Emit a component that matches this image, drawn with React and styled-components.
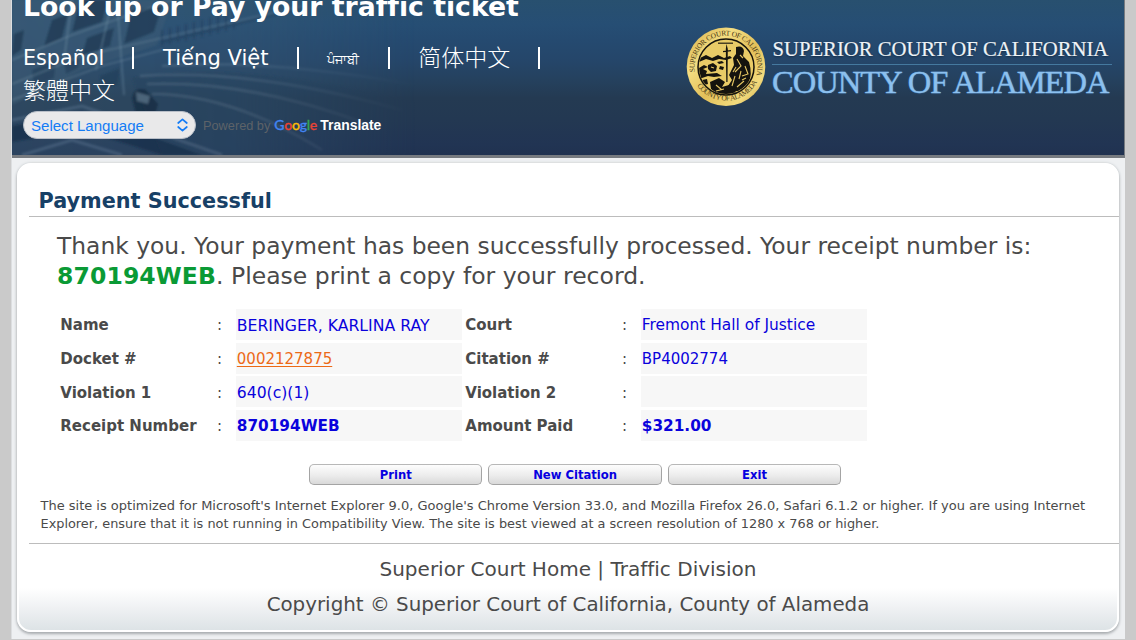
import React from 'react';
import styled, { createGlobalStyle } from 'styled-components';

const Global = createGlobalStyle`
  * { box-sizing: border-box; }
  body {
    margin: 0;
    background: #cacaca;
    color: #4a4a4a;
    font-family: Verdana, "DejaVu Sans", "Noto Sans CJK SC", sans-serif;
    font-variant-ligatures: none;
    overflow: hidden;
  }
`;

const Page = styled.div`
  width: 1114px;
  height: 639px;
  margin-left: 11px;
  background: #eef0f2;
  border-left: 1px solid #dcdee0;
  overflow: hidden;
`;

const Header = styled.header`
  position: relative;
  width: 1113px;
  height: 158px;
  border-bottom: 3px solid #777b80;
  border-right: 1px solid #777b80;
  background: linear-gradient(#28506f 0, #264e74 24px, #254a70 40px, #25466a 60px, #25415e 80px, #243a52 98px, #233852 120px, #213453 145px, #203250 155px);
`;

const Backdrop = styled.svg`
  position: absolute;
  left: 0;
  top: 0;
`;

const HeaderRow = styled.div`
  position: relative;
  display: flex;
  align-items: flex-start;
  height: 155px;
  padding-left: 11px;
`;

const Languages = styled.div`
  width: 663px;
`;

const SiteTitle = styled.h1`
  margin: -11px 0 0;
  color: #fff;
  font-size: 26.7px;
  line-height: 36px;
  height: 36px;
  white-space: nowrap;
`;

const LinkList = styled.nav`
  display: flex;
  align-items: center;
  height: 34px;
  margin-top: ${(p) => (p.$first ? '16px' : '0')};
`;

const Lang = styled.a`
  color: #fff;
  font-size: ${(p) => p.$size || 20.7}px;
  font-family: ${(p) => p.$font || 'inherit'};
  font-weight: ${(p) => p.$weight || 'normal'};
  line-height: 34px;
  margin-top: ${(p) => p.$shift || 0}px;
  white-space: nowrap;
`;

const Separator = styled.i`
  width: 2px;
  height: 22px;
  margin: 0 28.6px 0 28.2px;
  background: #fff;
`;

const TranslateBar = styled.div`
  display: flex;
  align-items: center;
  height: 28px;
  margin-top: 2px;
  font-family: Arial, "Liberation Sans", sans-serif;
`;

const Select = styled.div`
  display: flex;
  align-items: center;
  justify-content: space-between;
  width: 173px;
  height: 28px;
  padding: 0 7px;
  border: 1px solid #b9bfc8;
  border-radius: 14px;
  background: #e9e9ea;
  color: #147cf5;
  font-size: 15.05px;
`;

const Powered = styled.span`
  margin-left: 7px;
  color: #5d6268;
  font-size: 12.75px;
  white-space: nowrap;
`;

const Google = styled.span`
  margin: -2px 0 0 4px;
  font-family: "Product Sans", Lato, sans-serif;
  font-weight: 500;
  font-size: 14px;
  letter-spacing: -0.25px;
  -webkit-text-stroke: 0.3px;
  width: 42px;
`;

const Letter = styled.span`
  color: ${(p) => p.$color};
`;

const TranslateWord = styled.b`
  margin-left: 4px;
  color: #fff;
  font-size: 13.9px;
`;

const Brand = styled.div`
  display: flex;
  align-items: center;
  margin-top: 27px;
`;

const BrandText = styled.div`
  width: 340px;
  margin: 4px 0 0 6px;
  font-family: "Liberation Serif", serif;
  white-space: nowrap;
`;

const BrandTop = styled.div`
  height: 26px;
  padding-left: 0.5px;
  border-bottom: 1px solid #45799f;
  color: #eef3f7;
  font-size: 20.7px;
  line-height: 21px;
  -webkit-text-stroke: 0.2px;
  text-shadow: 0 1px 2px #142c44;
`;

const BrandBottom = styled.div`
  height: 34px;
  color: #8cc0ee;
  font-size: 32.5px;
  line-height: 35px;
  letter-spacing: -0.95px;
  -webkit-text-stroke: 0.4px;
  text-shadow: 0 0 2px #2f6ea8;
`;

const Panel = styled.main`
  width: 1102px;
  height: 469px;
  margin: 5px 0 0 5px;
  padding: 2px 0 0 10px;
  border: 2px solid #fff;
  border-radius: 14px;
  background: linear-gradient(#fff 0, #fff 423px, #eff1f3 443px, #dde3e6 465px);
  box-shadow: 0 2px 3px #a9adb0, 0 0 3px #c6cacd;
`;

const Heading = styled.h2`
  height: 50px;
  margin: 0 -2px 0 0;
  padding: 19px 0 0 9.5px;
  border-bottom: 1px solid #bcbcbc;
  color: #174066;
  font-size: 20.78px;
  line-height: 30px;
`;

const Message = styled.p`
  margin: 14px 0 0 28px;
  white-space: nowrap;
`;

const MessageLine = styled.span`
  display: block;
  font-size: ${(p) => p.$size}px;
  line-height: 30px;
`;

const ReceiptCode = styled.b`
  color: #0a9a35;
  letter-spacing: 0.12px;
`;

const Details = styled.div`
  display: grid;
  grid-template-columns: 154px 19px 226px 154px 19px 226px;
  column-gap: 2px;
  row-gap: 2.6px;
  grid-auto-rows: 31px;
  width: 808px;
  margin: 18px 0 0 30px;
  font-size: 15px;
  line-height: 31px;
`;

const Label = styled.div`
  padding: 1.4px 0 0 1.3px;
  font-weight: bold;
  white-space: nowrap;
`;

const Colon = styled.div`
  padding: 1.4px 0 0 2px;
`;

const Value = styled.div`
  padding: 1.4px 0 0 0.8px;
  background: #f7f7f7;
  color: ${(p) => (p.$link ? '#ec6a17' : '#0a02dc')};
  font-weight: ${(p) => (p.$strong ? 'bold' : 'normal')};
  font-size: ${(p) => p.$size || 15}px;
  text-decoration: ${(p) => (p.$link ? 'underline' : 'none')};
  text-underline-offset: 2px;
  white-space: nowrap;
`;

const Actions = styled.div`
  display: flex;
  gap: 6px;
  margin: 23px 0 0 280px;
`;

const Button = styled.button`
  width: 173.4px;
  height: 21px;
  padding: 1px 0 0;
  border: 1px solid #a4a4a4;
  border-top-color: #b8b8b8;
  border-radius: 5px;
  background: linear-gradient(#fdfdfd, #ececec 55%, #d9d9d9);
  color: #0600e0;
  font: bold 11.6px/18px Verdana, "DejaVu Sans", sans-serif;
`;

const Notice = styled.p`
  height: 48px;
  margin: 11px -2px 0 0;
  padding: 1px 0 0 11.5px;
  border-bottom: 1px solid #bcbcbc;
  line-height: 17.8px;
  white-space: nowrap;
`;

const NoticeLine = styled.span`
  display: block;
  font-size: ${(p) => p.$size}px;
`;

const Footer = styled.footer`
  margin-top: 8px;
  padding-right: 10px;
  line-height: 35px;
  text-align: center;
`;

const FooterLine = styled.div`
  font-size: ${(p) => p.$size}px;
`;

const GOOGLE = [['G', '#4285f4'], ['o', '#ea4335'], ['o', '#fbbc05'], ['g', '#4285f4'], ['l', '#34a853'], ['e', '#ea4335']];

const CELLS = [
  { label: 'Name', value: 'BERINGER, KARLINA RAY', size: 15.7 },
  { label: 'Court', value: 'Fremont Hall of Justice', size: 15.43 },
  { label: 'Docket #', value: '0002127875', link: true },
  { label: 'Citation #', value: 'BP4002774' },
  { label: 'Violation 1', value: '640(c)(1)', size: 15.6 },
  { label: 'Violation 2', value: '' },
  { label: 'Receipt Number', value: '870194WEB', strong: true, size: 15.3 },
  { label: 'Amount Paid', value: '$321.00', strong: true, size: 15.3 },
];

function StreetScene() {
  return (
    <Backdrop width="560" height="155" viewBox="0 0 560 155">
      <defs>
        <linearGradient id="fade">
          <stop offset="0" stopColor="#fff" />
          <stop offset=".4" stopColor="#fff" stopOpacity=".85" />
          <stop offset=".72" stopColor="#fff" stopOpacity="0" />
        </linearGradient>
        <mask id="sceneMask"><rect width="560" height="155" fill="url(#fade)" /></mask>
        <filter id="soft"><feGaussianBlur stdDeviation="1" /></filter>
      </defs>
      <g mask="url(#sceneMask)">
        <rect width="560" height="155" fill="#3c5c76" opacity=".4" />
        <g filter="url(#soft)">
          <path d="M0 0H160L145 45L70 70L0 105Z" fill="#3c5b75" opacity=".6" />
          <path d="M68 0L96 0L90 22L60 32ZM40 20L56 14L50 38L32 46ZM2 34L12 30L9 50L0 56ZM120 10L150 6L142 32L112 44ZM75 38L102 28L98 46L70 56Z" fill="#1c3853" opacity=".75" />
          <path d="M20 70L44 60L42 78L22 86ZM52 62L68 55L66 68L54 74ZM88 76L108 68L106 84L90 90Z" fill="#213d58" opacity=".6" />
          <path d="M0 60L60 35L160 0M0 84L70 56L150 38L290 6M0 100L90 66L150 50" fill="none" stroke="#7891a5" strokeWidth="1.5" opacity=".4" />
          <path d="M60 0L52 60M105 0L112 95M98 10L84 70" fill="none" stroke="#82a0b4" strokeWidth="1.5" opacity=".4" />
          <path d="M150 42L290 8M150 46v-16M158 44v-16M166 42v-16M174 41v-17M182 39v-17M190 37v-17M198 35v-17M206 33v-17M214 31v-17M222 29v-17" stroke="#1d3956" strokeWidth="2" opacity=".55" />
          <path d="M120 78Q220 58 410 104V155H150Z" fill="#29445f" opacity=".6" />
          <path d="M128 76Q240 68 390 110M135 84Q240 80 360 126M140 94Q220 94 310 150M150 66Q260 58 420 88" fill="none" stroke="#7590a7" strokeWidth="2.5" opacity=".3" />
          <path d="M120 98Q122 86 134 90L146 104L142 118L124 114Z" fill="#14293f" opacity=".7" />
          <path d="M124 92L138 96L136 104L125 101Z" fill="#50687d" />
          <path d="M0 126L70 112L190 155H150L70 130L0 142Z" fill="#152c46" opacity=".65" />
          <path d="M0 120L70 106L210 155M10 155L60 140L110 155" fill="none" stroke="#6c8aa2" strokeWidth="3" opacity=".35" />
        </g>
      </g>
    </Backdrop>
  );
}

function Seal() {
  return (
    <svg width="80" height="80" viewBox="0 0 80 80">
      <defs>
        <linearGradient id="gold" x2="1" y2="1">
          <stop offset="0" stopColor="#cfa743" />
          <stop offset=".3" stopColor="#f5de82" />
          <stop offset=".55" stopColor="#e3c05a" />
          <stop offset=".8" stopColor="#f3db7d" />
          <stop offset="1" stopColor="#bf9535" />
        </linearGradient>
        <path id="arcTop" d="M9.5 48A31.5 31.5 0 1 1 70.5 48" />
        <path id="arcBottom" d="M5 44A35.5 35.5 0 0 0 75 44" />
        <clipPath id="disc"><circle cx="40" cy="40" r="27" /></clipPath>
      </defs>
      <circle cx="40" cy="39.7" r="39.3" fill="url(#gold)" />
      <g fontFamily="Liberation Serif, serif" fontSize="7.4" fill="#4a3a16">
        <text><textPath href="#arcTop" textLength="112" startOffset="3">SUPERIOR COURT OF CALIFORNIA</textPath></text>
        <text><textPath href="#arcBottom" textLength="72" startOffset="16">COUNTY OF ALAMEDA</textPath></text>
      </g>
      <circle cx="40" cy="40" r="28" fill="#e9cb67" stroke="#15120c" strokeWidth="1.5" />
      <g clipPath="url(#disc)" fill="#15130e">
        <path d="M32 15.500h15v1.500H32z" opacity=".75" />
        <path d="M14 31L20 28L26 31L32 28L38 31L44 29L46 31L40 33L33 32L27 34L20 32L13 35Z" />
        <path d="M13 41L18 38L22 40L17 42L21 44L20 47L31 46L36 49L28 50L22 49L13 52Z" />
        <path d="M22 38L27 36L31 39L30 44L25 45L22 42ZM34 39L38 40L37 43L33 42ZM31 35L36 34L38 36L33 37Z" />
        <path d="M40.500 17L41.800 22L41.500 55H40.300L39.800 22ZM37 24L45 23V24.200L37 25.200Z" />
        <path d="M50 20Q57 18 58 24L57 29L63 35Q67 48 62 57L53 64L38 65L46 53L43 48L48 38L47 31L50 27Z" />
        <path d="M24 55L33 51L39 55L36 60L43 58L51 66L31 69L25 62ZM16 53L21 52L22 57L18 58Z" />
      </g>
      <g fill="none" stroke="#e5c563" strokeWidth="1.1">
        <path d="M51 32L55 39L49 45M59 39L62 47L56 49M49 49L46 59M58 54L51 60M54 28L57 31M30 58L36 63M25 40l3 1M30 64l8-2M50 40l-3 5M55 44l-2 8M60 51l-4 2" />
      </g>
    </svg>
  );
}

export default function App() {
  return (
    <>
      <Global />
      <Page>
        <Header>
          <StreetScene />
          <HeaderRow>
            <Languages>
              <SiteTitle>Look up or Pay your traffic ticket</SiteTitle>
              <LinkList $first>
                <Lang>Español</Lang>
                <Separator />
                <Lang $size={21.1}>Tiếng Việt</Lang>
                <Separator />
                <Lang $size={12.6} $shift={4}>ਪੰਜਾਬੀ</Lang>
                <Separator />
                <Lang $size={23} $shift={-5} $weight={300} $font={'"Noto Sans CJK SC", sans-serif'}>简体中文</Lang>
                <Separator />
              </LinkList>
              <LinkList>
                <Lang $size={23} $shift={-6} $weight={300} $font={'"Noto Sans CJK TC", sans-serif'}>繁體中文</Lang>
              </LinkList>
              <TranslateBar>
                <Select>
                  Select Language
                  <svg width="11" height="14" viewBox="0 0 11 14" fill="none" stroke="#147cf5" strokeWidth="1.7" strokeLinecap="round" strokeLinejoin="round">
                    <path d="M1.200 5L5.500 1.300L9.800 5M1.200 9L5.500 12.700L9.800 9" />
                  </svg>
                </Select>
                <Powered>Powered by</Powered>
                <Google>{GOOGLE.map(([c, color], i) => <Letter key={i} $color={color}>{c}</Letter>)}</Google>
                <TranslateWord>Translate</TranslateWord>
              </TranslateBar>
            </Languages>
            <Brand>
              <Seal />
              <BrandText>
                <BrandTop>SUPERIOR COURT OF CALIFORNIA</BrandTop>
                <BrandBottom>COUNTY OF ALAMEDA</BrandBottom>
              </BrandText>
            </Brand>
          </HeaderRow>
        </Header>
        <Panel>
          <Heading>Payment Successful</Heading>
          <Message>
            <MessageLine $size={23.39}>
              Thank you. Your payment has been successfully processed. Your receipt number is:
            </MessageLine>
            <MessageLine $size={23.5}>
              <ReceiptCode>870194WEB</ReceiptCode>. Please print a copy for your record.
            </MessageLine>
          </Message>
          <Details>
            {CELLS.map((c) => (
              <React.Fragment key={c.label}>
                <Label>{c.label}</Label>
                <Colon>:</Colon>
                <Value $link={c.link} $strong={c.strong} $size={c.size}>{c.value}</Value>
              </React.Fragment>
            ))}
          </Details>
          <Actions>
            <Button>Print</Button>
            <Button>New Citation</Button>
            <Button>Exit</Button>
          </Actions>
          <Notice>
            <NoticeLine $size={12.99}>
              The site is optimized for Microsoft's Internet Explorer 9.0, Google's Chrome Version 33.0, and Mozilla Firefox 26.0, Safari 6.1.2 or higher. If you are using Internet
            </NoticeLine>
            <NoticeLine $size={12.86}>
              Explorer, ensure that it is not running in Compatibility View. The site is best viewed at a screen resolution of 1280 x 768 or higher.
            </NoticeLine>
          </Notice>
          <Footer>
            <FooterLine $size={20.03}>Superior Court Home | Traffic Division</FooterLine>
            <FooterLine $size={19.85}>Copyright © Superior Court of California, County of Alameda</FooterLine>
          </Footer>
        </Panel>
      </Page>
    </>
  );
}
